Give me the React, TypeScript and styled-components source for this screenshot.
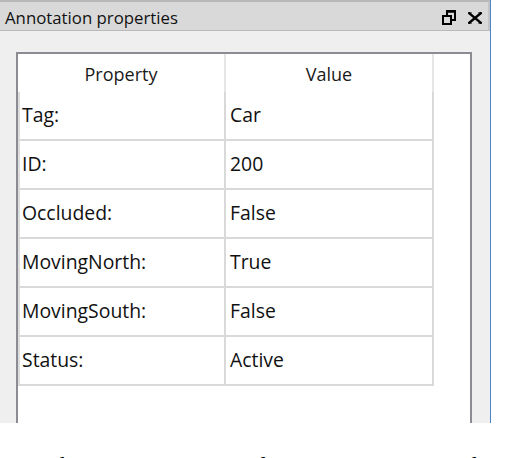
import React from "react";
import styled, { createGlobalStyle } from "styled-components";

const GlobalStyle = createGlobalStyle`
  html, body {
    margin: 0;
    padding: 0;
    background: #ffffff;
  }
  body {
    width: 522px;
    height: 458px;
    overflow: hidden;
    font-family: "Open Sans", "Noto Sans", sans-serif;
  }
`;

const Page = styled.div`
  display: flex;
  flex-direction: column;
  width: 522px;
  height: 458px;
  overflow: hidden;
`;

const Window = styled.div`
  display: flex;
  flex-direction: column;
  flex-shrink: 0;
  width: 490px;
  height: 423px;
  border-right: 1px solid #4a84c4;
  background: #efefef;
  overflow: hidden;
`;

const TitleBar = styled.div`
  display: flex;
  align-items: center;
  flex-shrink: 0;
  height: 28px;
  border-top: 2px solid #b7b7b7;
  border-bottom: 1px solid #b9b9b9;
  border-right: 2px solid #c4c4c4;
  background: #d9d9d9;
  padding: 0 6px 0 5px;
`;

const Title = styled.span`
  flex: 1;
  font-size: 16.8px;
  color: #111;
  padding-top: 3px;
`;

const IconButton = styled.span<{ $gap?: number }>`
  display: flex;
  align-items: center;
  justify-content: center;
  width: 14px;
  height: 14px;
  margin-left: ${(p) => p.$gap ?? 0}px;
  margin-top: 3px;
`;

const Panel = styled.div`
  flex: 1;
  display: flex;
  padding: 21px 18px 0 16px;
  min-height: 0;
`;

const TableBox = styled.div`
  flex: 1;
  background: #ffffff;
  border: 2px solid #8b8b93;
  border-bottom: none;
  height: 420px;
`;

const Grid = styled.div`
  display: grid;
  grid-template-columns: 208px 208px;
  width: 416px;
`;

const HeaderCell = styled.div`
  height: 38px;
  display: flex;
  align-items: center;
  justify-content: center;
  border-right: 2px solid #e6e6e6;
  font-size: 18px;
  color: #1a1a1a;
  padding-top: 1px;
  box-sizing: border-box;
`;

const Cell = styled.div<{ $first?: boolean }>`
  height: 49px;
  box-sizing: border-box;
  display: flex;
  align-items: center;
  border-right: 2px solid #d9d9d9;
  border-bottom: 2px solid #d9d9d9;
  border-left: ${(p) => (p.$first ? "2px solid #dedede" : "none")};
  padding-left: ${(p) => (p.$first ? 2 : 4)}px;
  padding-bottom: 2px;
  font-size: 19.4px;
  color: #111;
`;

const Caption = styled.div`
  flex-shrink: 0;
  margin-top: 30px;
  padding-left: 2px;
  font-family: "Liberation Serif", "Times New Roman", serif;
  font-size: 24px;
  line-height: 24px;
  white-space: nowrap;
  word-spacing: 15px;
  color: #000;
`;

const Number = styled.span`
  display: inline-block;
  width: 41px;
`;

const rows: [string, string][] = [
  ["Tag:", "Car"],
  ["ID:", "200"],
  ["Occluded:", "False"],
  ["MovingNorth:", "True"],
  ["MovingSouth:", "False"],
  ["Status:", "Active"],
];

const RestoreIcon = () => (
  <svg width="14" height="15" viewBox="0 0 14 15">
    <rect x="1" y="6" width="8" height="8" fill="none" stroke="#000" strokeWidth="2" />
    <path d="M5 6 V1.5 H13 V10 H9" fill="none" stroke="#000" strokeWidth="2" />
    <rect x="4" y="0" width="10" height="2.5" fill="#000" />
  </svg>
);

const CloseIcon = () => (
  <svg width="15" height="12" viewBox="0 0 15 12">
    <path d="M1.5 1 L13.5 11 M13.5 1 L1.5 11" stroke="#000" strokeWidth="2.6" strokeLinecap="square" />
    <path d="M0 0.5 H4 M11 0.5 H15 M0 11.5 H4 M11 11.5 H15" stroke="#000" strokeWidth="1" />
  </svg>
);

export default function App() {
  return (
    <>
      <GlobalStyle />
      <Page>
        <Window>
          <TitleBar>
            <Title>Annotation properties</Title>
            <IconButton>
              <RestoreIcon />
            </IconButton>
            <IconButton $gap={12}>
              <CloseIcon />
            </IconButton>
          </TitleBar>
          <Panel>
            <TableBox>
              <Grid>
                <HeaderCell>Property</HeaderCell>
                <HeaderCell>Value</HeaderCell>
                {rows.map(([k, v]) => (
                  <React.Fragment key={k}>
                    <Cell $first>{k}</Cell>
                    <Cell>{v}</Cell>
                  </React.Fragment>
                ))}
              </Grid>
            </TableBox>
          </Panel>
        </Window>
        <Caption>
          <Number>2.</Number>Object properties of an annotation. The
        </Caption>
      </Page>
    </>
  );
}
